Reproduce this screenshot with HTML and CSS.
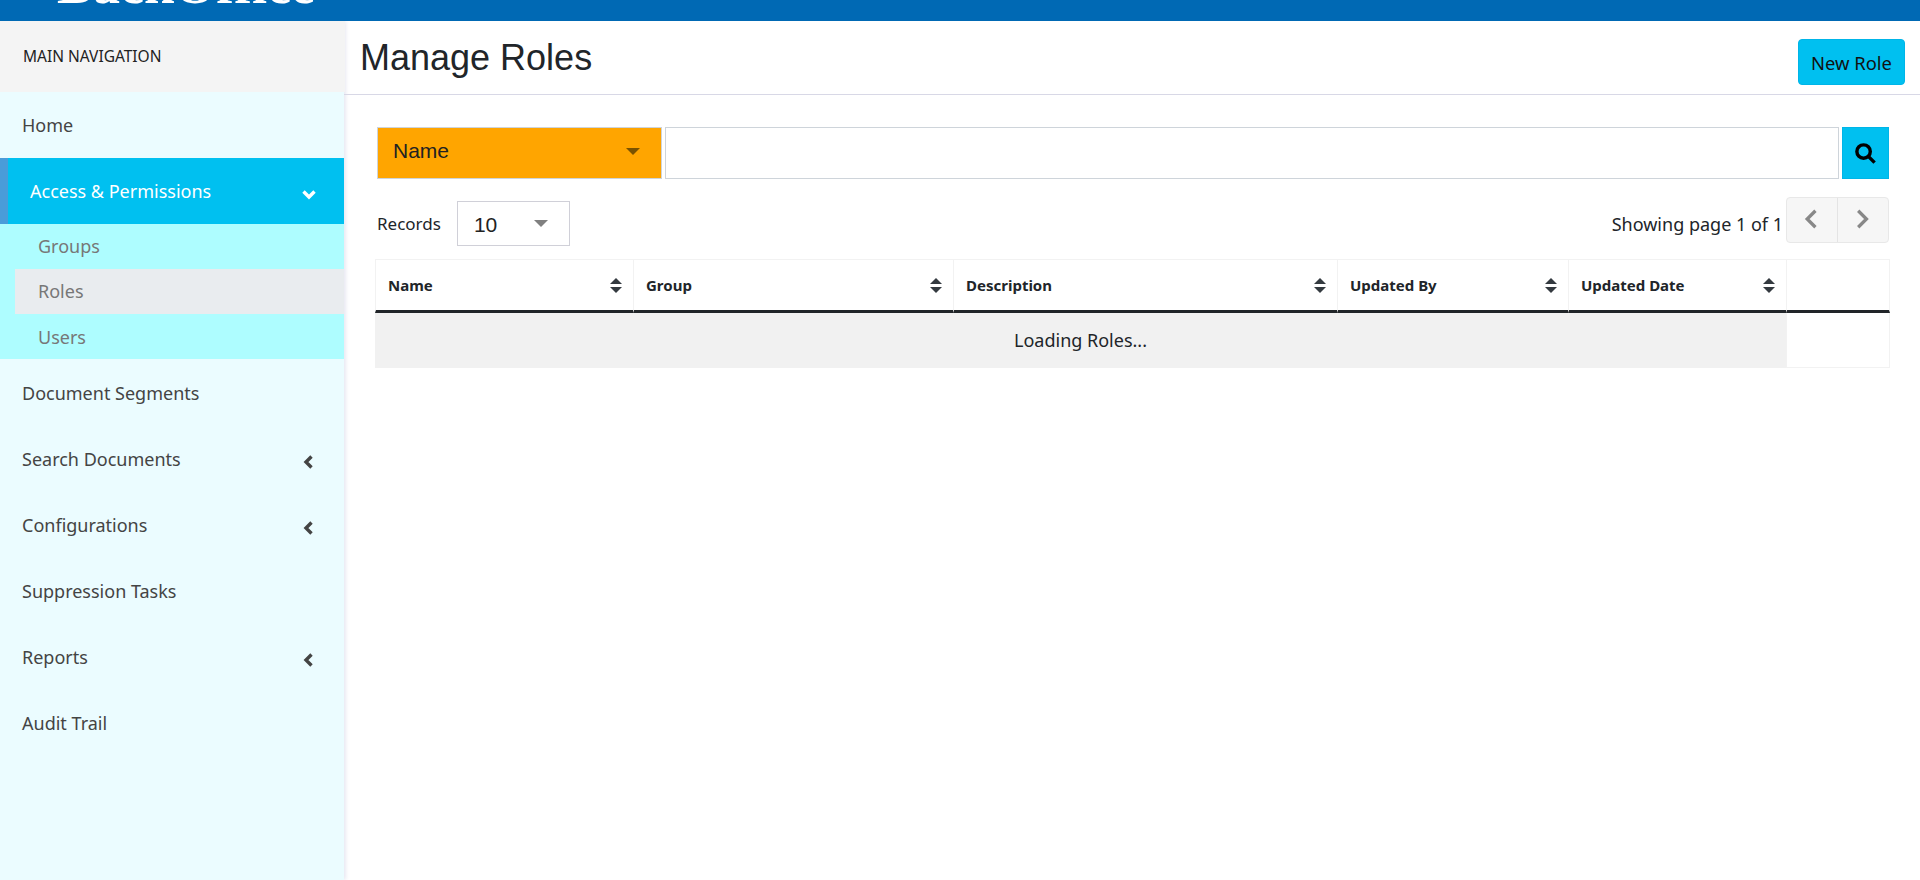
FILE: index.html
```html
<!DOCTYPE html>
<html lang="en">
<head>
  <meta charset="UTF-8">
  <title>Manage Roles</title>
  <link rel="stylesheet" href="styles.css">
</head>
<body>

  <header class="topbar">
    <div class="logo">BackOffice</div>
  </header>

  <div class="layout">
    <nav class="sidebar">
      <div class="nav-title">MAIN NAVIGATION</div>
      <a class="nav-item">Home</a>
      <a class="nav-item nav-open">Access &amp; Permissions
        <svg class="chev" viewBox="0 0 16 16"><path d="M2.5 5.5 8 11l5.5-5.5" /></svg>
      </a>
      <div class="subnav">
        <a class="sub-item">Groups</a>
        <a class="sub-item sub-active">Roles</a>
        <a class="sub-item">Users</a>
      </div>
      <a class="nav-item">Document Segments</a>
      <a class="nav-item">Search Documents
        <svg class="chev" viewBox="0 0 16 16"><path d="M10.5 2.5 5 8l5.5 5.5" /></svg>
      </a>
      <a class="nav-item">Configurations
        <svg class="chev" viewBox="0 0 16 16"><path d="M10.5 2.5 5 8l5.5 5.5" /></svg>
      </a>
      <a class="nav-item">Suppression Tasks</a>
      <a class="nav-item">Reports
        <svg class="chev" viewBox="0 0 16 16"><path d="M10.5 2.5 5 8l5.5 5.5" /></svg>
      </a>
      <a class="nav-item">Audit Trail</a>
    </nav>

    <main class="content">
      <div class="page-head">
        <h1>Manage Roles</h1>
        <button class="btn-new">New Role</button>
      </div>

      <div class="panel">
        <div class="search-row">
          <div class="search-field">Name <span class="caret caret-dark"></span></div>
          <div class="search-input"></div>
          <button class="search-btn">
            <svg viewBox="0 0 24 24"><circle cx="10" cy="10" r="7" /><path d="m15.5 15.5 6 6" /></svg>
          </button>
        </div>

        <div class="records-row">
          <span class="records-label">Records</span>
          <div class="records-select">10 <span class="caret"></span></div>
          <span class="page-info">Showing page 1 of 1</span>
          <div class="pager">
            <button><svg viewBox="0 0 16 16"><path d="M10.5 2 4.5 8l6 6" /></svg></button>
            <button><svg viewBox="0 0 16 16"><path d="M4.5 2l6 6-6 6" /></svg></button>
          </div>
        </div>

        <table class="roles">
          <colgroup>
            <col class="c-name"><col class="c-group"><col class="c-desc"><col class="c-by"><col class="c-date"><col class="c-act">
          </colgroup>
          <thead>
            <tr>
              <th><div class="th-in">Name <span class="sort"></span></div></th>
              <th><div class="th-in">Group <span class="sort"></span></div></th>
              <th><div class="th-in">Description <span class="sort"></span></div></th>
              <th><div class="th-in">Updated By <span class="sort"></span></div></th>
              <th><div class="th-in">Updated Date <span class="sort"></span></div></th>
              <th></th>
            </tr>
          </thead>
          <tbody>
            <tr>
              <td class="loading" colspan="5">Loading Roles...</td>
              <td></td>
            </tr>
          </tbody>
        </table>
      </div>
    </main>
  </div>

</body>
</html>
```

FILE: styles.css
```css
* { box-sizing: border-box; }
html, body { height: 100%; }
body { margin: 0; font-family: "Noto Sans", sans-serif; color: #212529; background: #fff; overflow: hidden; }

.topbar { position: relative; z-index: 1; height: 21px; background: #0069b4; overflow: hidden; padding-left: 57px; }
.logo { font-family: "Liberation Serif", serif; font-weight: bold; font-size: 54px; line-height: 54px; margin-top: -42px; color: #fff; }

.layout { display: flex; height: 859px; }

.sidebar { width: 344px; background: #ebfcff; flex: none; box-shadow: 2px 0 4px #e8e8f2; }
.nav-title { height: 71px; width: 345px; background: #f4f4f4; padding-left: 23px; font-size: 15.5px; line-height: 71px; color: #222; }
.nav-item { display: flex; align-items: center; justify-content: space-between; height: 66px; padding: 0 26px 0 22px; font-size: 18px; color: #444; }
.subnav ~ .nav-item { padding-top: 2px; }
.nav-open { background: #00c0f0; color: #fff; border-left: 8px solid #4a9cd9; }
.nav-open .chev path { stroke: #fff; }
.chev { width: 16px; height: 16px; margin-top: 5px; margin-right: 1px; }
.chev path { fill: none; stroke: #444; stroke-width: 3.4; }

.subnav { height: 135px; background: #aefdff; }
.sub-item { display: block; height: 45px; padding-left: 38px; font-size: 18px; line-height: 44px; color: #777; }
.sub-item:last-child { line-height: 46px; }
.sub-active { margin-left: 15px; padding-left: 23px; background: #e9ecef; }

.content { flex: 1; }

.page-head { height: 74px; display: flex; justify-content: space-between; padding: 18px 15px 0 16px; border-bottom: 1px solid #d8d8e6; }
.page-head h1 { margin: 0; font-family: "Liberation Sans", sans-serif; font-weight: normal; font-size: 36px; line-height: 38px; }
.btn-new { height: 46px; width: 107px; border: 1px solid #00b5e8; border-radius: 4px; background: #00c0f0; font: 18.4px "Noto Sans", sans-serif; color: #111; }

.panel { padding: 32px 30px 0 31px; }

.search-row { display: flex; height: 52px; padding-left: 2px; }
.search-field { width: 285px; background: orange; border: 1px solid #ced4da; padding: 0 15px 4px; font: 21px/46px "Liberation Sans", sans-serif; color: #222; display: flex; justify-content: space-between; align-items: center; }
.search-input { width: 1174px; margin-left: 3px; border: 1px solid #ced4da; background: #fff; }
.search-btn { width: 47px; margin-left: 3px; padding: 0; border: 1px solid #00b5e8; background: #00c0f0; }
.search-btn svg { width: 23px; height: 23px; display: block; margin: 0 auto; }
.search-btn circle, .search-btn path { fill: none; stroke: #000; stroke-width: 3.6; }

.caret { display: inline-block; width: 0; height: 0; border-left: 7px solid transparent; border-right: 7px solid transparent; border-top: 7px solid #808080; }
.caret-dark { border-top-color: #7a5200; margin-right: 6px; }

.records-row { display: flex; align-items: flex-start; margin-top: 18px; padding-left: 2px; height: 62px; }
.records-label { font-size: 17px; line-height: 54px; }
.records-select { width: 113px; height: 45px; margin-left: 16px; margin-top: 4px; border: 1px solid #d0d0d8; padding: 3px 21px 0 16px; font: 21px "Liberation Sans", sans-serif; color: #222; display: flex; justify-content: space-between; align-items: center; }
.records-select .caret { margin-top: -3px; }
.page-info { margin-left: auto; margin-right: 3px; font-size: 18px; line-height: 54px; }
.pager { display: flex; width: 103px; height: 46px; margin-right: 1px; border: 1px solid #e8e8e8; border-radius: 4px; background: #f6f6f6; }
.pager button { flex: 1; padding: 0; border: 0; background: transparent; }
.pager button + button { border-left: 1px solid #e4e4e4; }
.pager svg { width: 22px; height: 22px; display: block; margin: -3px auto 0; }
.pager path { fill: none; stroke: #888; stroke-width: 2.4; }

.roles { border-collapse: separate; border-spacing: 0; table-layout: fixed; width: 1515px; }
.c-name { width: 258px; }
.c-group { width: 320px; }
.c-desc { width: 384px; }
.c-by { width: 231px; }
.c-date { width: 218px; }
.c-act { width: 104px; }
.roles th { height: 54px; padding: 0 12px; border-top: 1px solid #f2f2f2; border-left: 1px solid #f2f2f2; border-bottom: 3px solid #212529; font-size: 15px; font-weight: bold; text-align: left; }
.roles th:last-child { border-right: 1px solid #f2f2f2; }
.roles td { height: 55px; border: 1px solid #f2f2f2; border-top: 0; font-size: 18px; text-align: center; }
.roles td.loading { background: #f1f1f1; border-color: #f1f1f1; }
.th-in { display: flex; justify-content: space-between; align-items: center; }

.sort { position: relative; width: 12px; height: 15px; margin-right: -1px; }
.sort::before, .sort::after { content: ""; position: absolute; left: 0; width: 0; height: 0; border-left: 6px solid transparent; border-right: 6px solid transparent; }
.sort::before { top: 0; border-bottom: 6px solid #343a40; }
.sort::after { bottom: 0; border-top: 6px solid #343a40; }
```
